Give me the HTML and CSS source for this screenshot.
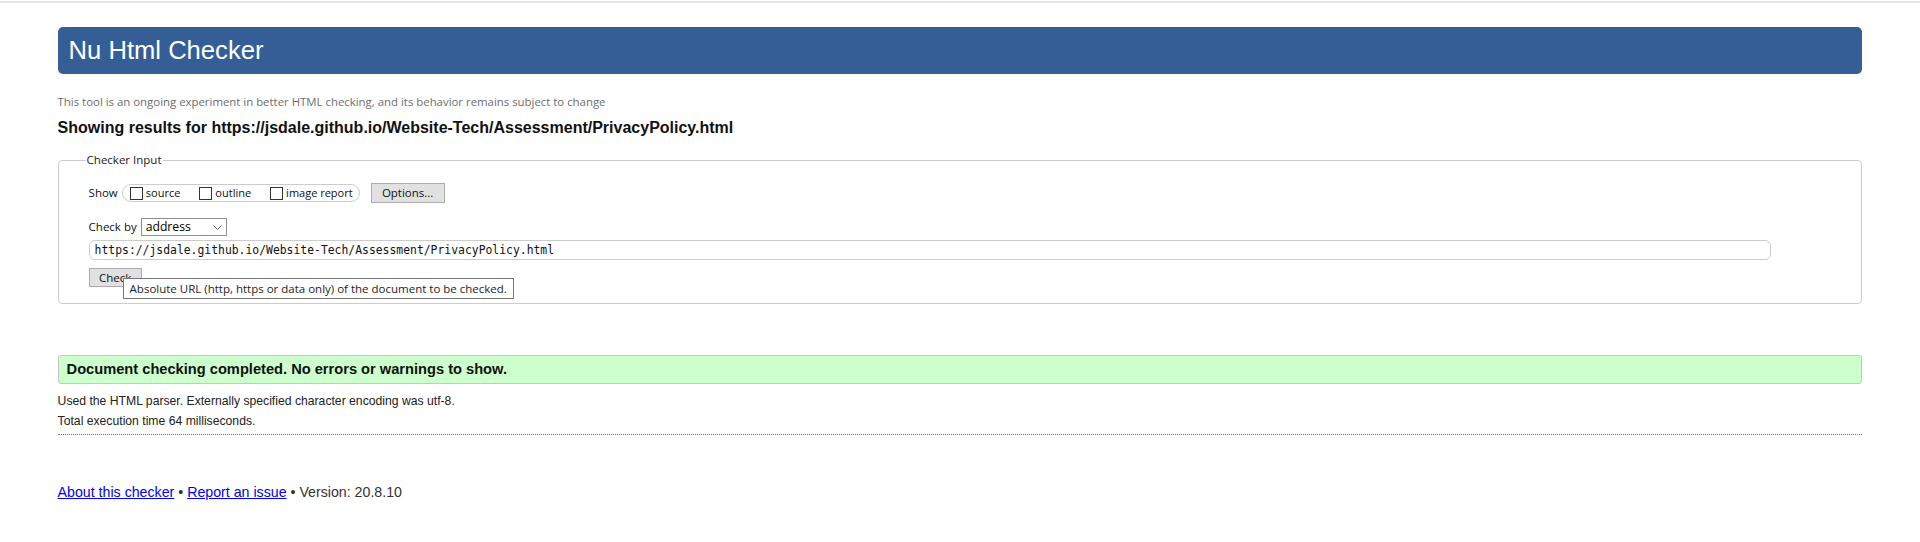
FILE: index.html
```html
<!DOCTYPE html>
<html lang="en">
<head>
<meta charset="utf-8">
<title>Showing results for https://jsdale.github.io/Website-Tech/Assessment/PrivacyPolicy.html - Nu Html Checker</title>
<link rel="stylesheet" href="styles.css">
</head>
<body>
<div class="topline"></div>
<div class="page">
  <header class="banner"><h1 class="banner-title">Nu Html Checker</h1></header>
  <p class="note">This tool is an ongoing experiment in better HTML checking, and its behavior remains subject to change</p>
  <h2 class="results-title">Showing results for https://jsdale.github.io/Website-Tech/Assessment/PrivacyPolicy.html</h2>

  <form class="checker-form">
    <fieldset class="checker-input">
      <legend class="checker-legend">Checker Input</legend>
      <div class="form-row">
        <span class="form-label">Show</span>
        <fieldset class="show-options">
          <label class="opt"><input type="checkbox" class="cb">source</label>
          <label class="opt"><input type="checkbox" class="cb">outline</label>
          <label class="opt"><input type="checkbox" class="cb">image report</label>
        </fieldset>
        <button type="button" class="btn btn-options">Options...</button>
      </div>
      <div class="form-row row-checkby">
        <span class="form-label">Check by</span>
        <span class="select-wrap">
          <select class="select">
            <option>address</option>
            <option>file upload</option>
            <option>text input</option>
          </select>
          <svg class="chevron" width="9" height="5" viewBox="0 0 9 5" aria-hidden="true"><path d="M0.5 0.5 L4.5 4.5 L8.5 0.5" fill="none" stroke="#606060" stroke-width="1"/></svg>
        </span>
      </div>
      <input class="url-input" type="url" value="https://jsdale.github.io/Website-Tech/Assessment/PrivacyPolicy.html">
      <div class="check-row">
        <button type="submit" class="btn btn-check">Check</button>
        <div class="tooltip">Absolute URL (http, https or data only) of the document to be checked.</div>
      </div>
    </fieldset>
  </form>

  <div class="success">Document checking completed. No errors or warnings to show.</div>
  <p class="details">Used the HTML parser. Externally specified character encoding was utf-8.</p>
  <p class="details">Total execution time 64 milliseconds.</p>
  <hr class="dotted">
  <p class="footer"><a href="#">About this checker</a> &bull; <a href="#">Report an issue</a> &bull; Version: 20.8.10</p>
</div>
</body>
</html>
```
FILE: styles.css
```css
html, body {
  margin: 0;
  padding: 0;
  background: #ffffff;
}

body {
  font-family: "Liberation Sans", Arial, sans-serif;
  color: #222222;
}

.topline {
  height: 2px;
  margin-top: 1px;
  background: #e4e4e4;
}

.page {
  padding: 0 3%;
}

.banner {
  margin-top: 24px;
  height: 47px;
  background: #365e96;
  border-radius: 5px;
  padding: 0 11px;
  box-sizing: border-box;
}

.banner-title {
  margin: 0;
  font-family: "Liberation Sans", Arial, sans-serif;
  font-weight: normal;
  font-size: 25.6px;
  line-height: 47px;
  color: #ffffff;
}

.note {
  margin: 20px 0 0;
  font-family: "Open Sans", sans-serif;
  font-size: 11.4px;
  line-height: 15px;
  color: #6d6d6d;
}

.results-title {
  margin: 10px 0 0;
  font-family: "Liberation Sans", Arial, sans-serif;
  font-weight: bold;
  font-size: 16px;
  line-height: 18px;
  color: #111111;
}

.checker-form {
  margin: 15px 0 0;
}

.checker-input {
  margin: 0;
  padding: 15px 28px 16px 30px;
  border: 1px solid #cccccc;
  border-radius: 4px;
  font-family: "Open Sans", sans-serif;
  font-size: 11.5px;
  color: #111111;
}

.checker-legend {
  padding: 0 1px;
  margin-left: -3px;
  line-height: 16px;
  font-size: 11.5px;
  color: #222222;
}

.form-row {
  display: flex;
  align-items: center;
  line-height: 16px;
}

.form-label {
  margin-right: 4px;
}

.show-options {
  display: flex;
  align-items: center;
  margin: 0;
  padding: 0 6px 0 7px;
  height: 18px;
  box-sizing: border-box;
  border: 1px solid #cccccc;
  border-radius: 9px;
  min-inline-size: 0;
  font-size: 11px;
}

.opt {
  display: flex;
  align-items: center;
  margin-right: 19px;
}

.opt:last-child {
  margin-right: 0;
}

.cb {
  -webkit-appearance: none;
  appearance: none;
  width: 13px;
  height: 13px;
  margin: 0 3px 0 0;
  border: 1px solid #333333;
  background: #ffffff;
  box-sizing: border-box;
}

.btn {
  font-family: "Open Sans", sans-serif;
  font-size: 11.5px;
  color: #111111;
  background: #e1e1e1;
  border: 1px solid #adadad;
  border-radius: 0;
  box-sizing: border-box;
  margin: 0;
}

.btn-options {
  margin-left: 11px;
  height: 20px;
  width: 74px;
  padding: 0;
  line-height: 16px;
}

.row-checkby {
  margin-top: 15px;
}

.select-wrap {
  position: relative;
  display: inline-block;
}

.select {
  -webkit-appearance: none;
  appearance: none;
  width: 86px;
  height: 18px;
  box-sizing: border-box;
  border: 1px solid #8f8f8f;
  border-radius: 0;
  background: #ffffff;
  padding: 0 0 0 4px;
  margin: 0;
  font-family: "Open Sans", sans-serif;
  font-size: 12.2px;
  line-height: 16px;
  color: #000000;
  display: block;
}

.chevron {
  position: absolute;
  right: 5px;
  top: 7px;
  pointer-events: none;
}

.url-input {
  display: block;
  margin: 4px 0 0;
  width: 96.4%;
  height: 20px;
  box-sizing: border-box;
  border: 1px solid #cccccc;
  border-radius: 6px;
  padding: 0 0 0 5px;
  font-family: "DejaVu Sans Mono", "Liberation Mono", monospace;
  font-size: 11.4px;
  color: #111111;
  background: #ffffff;
  outline: none;
}

.check-row {
  position: relative;
  margin-top: 8px;
  height: 19px;
}

.btn-check {
  display: block;
  height: 19px;
  width: 53px;
  padding: 0;
  line-height: 16px;
}

.tooltip {
  position: absolute;
  left: 34px;
  top: 10px;
  height: 21px;
  box-sizing: border-box;
  padding: 0 6px;
  border: 1px solid #767676;
  background: #ffffff;
  font-family: "Open Sans", sans-serif;
  font-size: 11.5px;
  line-height: 19px;
  color: #1e1e1e;
  white-space: nowrap;
}

.success {
  margin-top: 51px;
  height: 29px;
  box-sizing: border-box;
  padding: 0 8px;
  border: 1px solid #c6c6c6;
  border-radius: 3px;
  background: #ccffcc;
  font-family: "Liberation Sans", Arial, sans-serif;
  font-weight: bold;
  font-size: 14.65px;
  line-height: 27px;
  color: #111111;
}

.details {
  margin: 0;
  font-size: 12.2px;
  line-height: 20px;
  color: #222222;
}

.success + .details {
  margin-top: 7px;
}

.dotted {
  margin: 3px 0 0;
  height: 0;
  border: 0;
  border-top: 1px dotted #777777;
}

.footer {
  margin: 48px 0 0;
  font-size: 14.2px;
  line-height: 18px;
  color: #333333;
}

.footer a {
  color: #0000ee;
  text-decoration: underline;
}
```
